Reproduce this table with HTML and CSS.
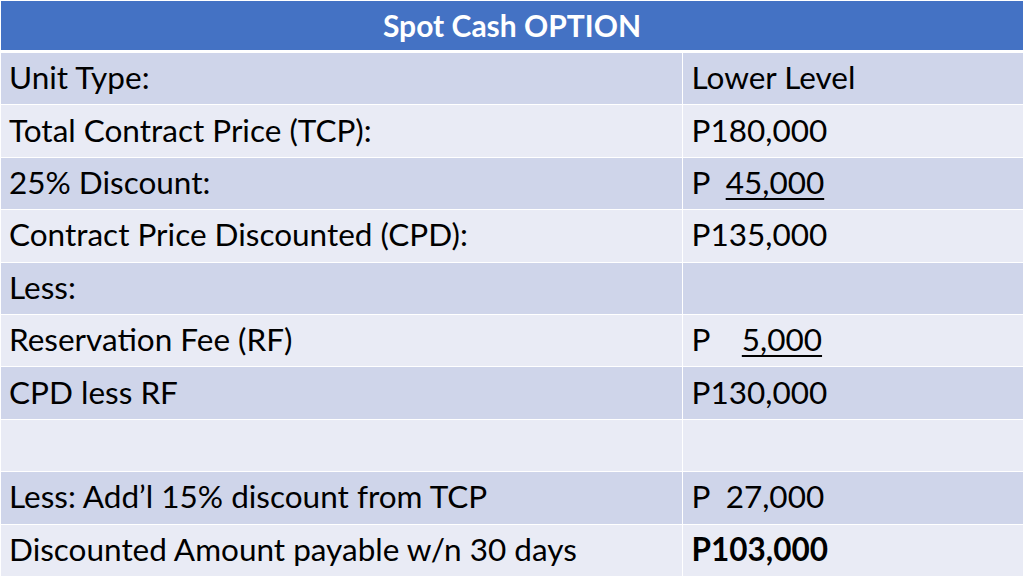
FILE: index.html
```html
<!DOCTYPE html>
<html>
<head>
<meta charset="utf-8">
<link rel="stylesheet" href="styles.css">
</head>
<body>
<table class="sheet">
  <colgroup><col class="c-label"><col class="c-value"></colgroup>
  <thead>
    <tr><th colspan="2" class="title">Spot Cash OPTION</th></tr>
  </thead>
  <tbody>
    <tr class="odd"><td>Unit Type:</td><td>Lower Level</td></tr>
    <tr class="even"><td>Total Contract Price (TCP):</td><td>P180,000</td></tr>
    <tr class="odd"><td>25% Discount:</td><td>P&nbsp; <span class="u">45,000</span></td></tr>
    <tr class="even"><td>Contract Price Discounted (CPD):</td><td>P135,000</td></tr>
    <tr class="odd"><td>Less:</td><td></td></tr>
    <tr class="even"><td>Reservation Fee (RF)</td><td>P&nbsp;&nbsp;&nbsp; <span class="u">5,000</span></td></tr>
    <tr class="odd"><td>CPD less RF</td><td>P130,000</td></tr>
    <tr class="even"><td>&nbsp;</td><td></td></tr>
    <tr class="odd"><td>Less: Add’l 15% discount from TCP</td><td>P&nbsp; 27,000</td></tr>
    <tr class="even"><td>Discounted Amount payable w/n 30 days</td><td class="b">P103,000</td></tr>
  </tbody>
</table>
</body>
</html>
```

FILE: styles.css
```css
html, body {
  margin: 0;
  padding: 0;
  background: #ffffff;
}
body {
  padding: 1px 1px 0 1px;
  font-family: Lato, "Open Sans", sans-serif;
}
.sheet {
  width: 1022px;
  border-collapse: collapse;
  table-layout: fixed;
}
.c-label { width: 681px; }
.c-value { width: 341px; }
.title {
  background: #4472c4;
  color: #ffffff;
  font-weight: bold;
  font-size: 30px;
  line-height: 36px;
  height: 47px;
  padding: 0 0 2px 0;
  text-align: center;
  border-bottom: 3px solid #ffffff;
}
td {
  height: 48.4px;
  padding: 0 0 3px 8px;
  font-size: 31.5px;
  line-height: 38px;
  color: #000000;
  border: 1px solid #ffffff;
  border-top: 0;
  white-space: nowrap;
  vertical-align: middle;
}
td:first-child { border-left: 0; }
td:last-child { border-right: 0; padding-left: 9px; }
.odd td { background: #cfd5ea; }
.even td { background: #e9ebf5; }
.u { text-decoration: underline; text-decoration-thickness: 2px; text-underline-offset: 4px; }
.b { font-weight: bold; }
```
